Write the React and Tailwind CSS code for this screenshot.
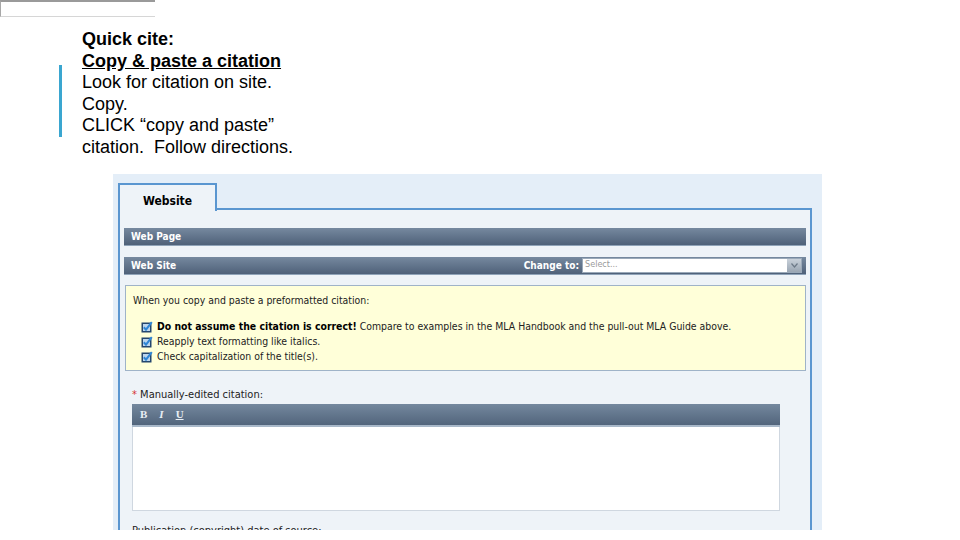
import React from 'react';

const ui = { fontFamily: '"DejaVu Sans Condensed", "DejaVu Sans", sans-serif' };
const serif = { fontFamily: '"Liberation Serif", serif' };

const Check = () => (
  <svg width="12" height="12" viewBox="0 0 12 12" className="shrink-0">
    <rect x="0.5" y="1.5" width="10" height="10" fill="#24466e" />
    <rect x="2" y="3" width="7" height="7" fill="#bcd6ee" />
    <path d="M2.8 6.2 L5 8.6 L10.8 1.2" stroke="#2f86d6" strokeWidth="2" fill="none" />
  </svg>
);

const Bar = ({ children, className = '' }) => (
  <div
    className={`flex items-center h-[18px] px-[7px] bg-gradient-to-b from-[#76899f] to-[#4f6179] border-b border-[#8fa3b8] text-white font-bold text-[10px] ${className}`}
  >
    {children}
  </div>
);

export default function App() {
  return (
    <div className="w-[960px] h-[540px] bg-white overflow-hidden" style={{ fontFamily: '"Liberation Sans", Arial, sans-serif' }}>
      <div className="w-[155px] h-[17px] border-t-2 border-l border-b border-t-[#9a9a9a] border-l-[#a8a8a8] border-b-[#d6d6d6]" />

      <div className="flex mt-[12px]">
        <div className="w-[3px] h-[72px] bg-[#3aa6d0] ml-[59px] mt-[36px]" />
        <div className="ml-[20px] text-[18px] leading-[21.6px] text-black">
          <div className="font-bold">Quick cite:</div>
          <div className="font-bold underline">Copy &amp; paste a citation</div>
          <div>Look for citation on site.</div>
          <div>Copy.</div>
          <div>CLICK “copy and paste”</div>
          <div>citation.&nbsp; Follow directions.</div>
        </div>
      </div>

      <div className="ml-[113px] mt-[15px] w-[709px] h-[356px] bg-[#e4eef8] pt-[8px] pl-[5px] pr-[10px] overflow-hidden" style={ui}>
        <div className="flex">
          <div className="w-[99px] h-[28px] border-2 border-b-0 border-[#5a96d0] bg-[#eef3f8] flex items-start justify-center pt-[7px] text-[12px] font-bold text-black relative top-[1px]">
            Website
          </div>
          <div className="flex-1 border-b-2 border-[#5a96d0]" />
        </div>
        <div className="border-l-2 border-r-2 border-[#5a96d0] bg-[#eef3f8] h-[400px] pt-[18px] px-[4px]">
          <Bar>Web Page</Bar>
          <Bar className="mt-[11px] justify-between pr-[4px]">
            <span>Web Site</span>
            <div className="flex items-center gap-[3px]">
              <span>Change to:</span>
              <div className="w-[220px] h-[15px] bg-white border border-[#9aa9b9] flex items-center justify-between">
                <span className="text-[#9a9a9a] font-normal text-[9px] pl-[2px]">Select...</span>
                <div className="w-[14px] h-[13px] bg-gradient-to-b from-[#c9d1da] to-[#9aa6b3] flex items-center justify-center">
                  <svg width="7" height="5" viewBox="0 0 7 5"><path d="M0.5 0.5 L3.5 4 L6.5 0.5" stroke="#6d7a88" strokeWidth="1.2" fill="none" /></svg>
                </div>
              </div>
            </div>
          </Bar>

          <div className="mt-[10px] ml-[1px] h-[86px] bg-[#ffffd9] border border-[#9fb3c8] px-[7px] pt-[7px] text-[10.4px] text-[#222]">
            <div>When you copy and paste a preformatted citation:</div>
            <div className="mt-[11px] ml-[8px] flex flex-col">
              <div className="flex items-center gap-[4px] h-[15px]">
                <Check />
                <span><b className="text-black">Do not assume the citation is correct!</b> Compare to examples in the MLA Handbook and the pull-out MLA Guide above.</span>
              </div>
              <div className="flex items-center gap-[4px] h-[15px]">
                <Check />
                <span>Reapply text formatting like italics.</span>
              </div>
              <div className="flex items-center gap-[4px] h-[15px]">
                <Check />
                <span>Check capitalization of the title(s).</span>
              </div>
            </div>
          </div>

          <div className="mt-[16px] ml-[8px] text-[11px] text-[#222]">
            <span className="text-[#d63333]">*</span> Manually-edited citation:
          </div>
          <div className="ml-[8px] mt-[1px] w-[648px]">
            <div className="h-[23px] bg-gradient-to-b from-[#74889e] to-[#52657c] border-b-2 border-[#a8b8c9] flex items-center gap-[12px] px-[8px] text-[11px] font-bold text-[#e8eef4]">
              <span style={serif}>B</span>
              <span style={serif} className="italic">I</span>
              <span style={serif} className="underline">U</span>
            </div>
            <div className="h-[84px] bg-white border-l border-r border-b border-[#cfd7e0]" />
          </div>
          <div className="mt-[13px] ml-[8px] text-[11px] leading-[13px] text-[#222]">Publication (copyright) date of source:</div>
        </div>
      </div>
    </div>
  );
}
